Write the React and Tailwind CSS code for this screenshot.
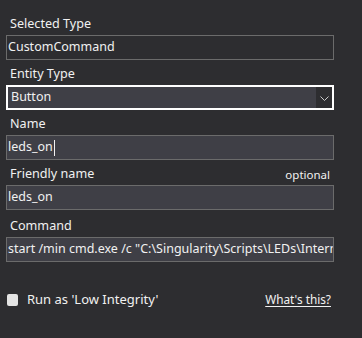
const Label = ({ children, right }) => (
  <div className="flex h-[25px] items-end justify-between pb-[2px] pl-1 pr-1">
    <span className="text-[12.6px] leading-[18px] text-[#f1f1f1]">{children}</span>
    {right && (
      <span className="text-[11.5px] leading-[16px] text-[#f1f1f1]">{right}</span>
    )}
  </div>
);

const Field = ({ value, readOnly, caret }) => (
  <div
    className={`flex h-[25px] items-center overflow-hidden whitespace-nowrap border border-[#6b6b6b] pl-[1px] text-[12.5px] text-[#f1f1f1] ${
      readOnly ? "bg-[#2d2d30]" : "bg-[#3f3f46]"
    }`}
  >
    {value}
    {caret && <span className="ml-px h-[16px] w-px bg-[#f1f1f1]" />}
  </div>
);

export default function App() {
  return (
    <div
      className="h-[338px] w-[362px] bg-[#2d2d30] pl-[6px] pt-[10px]"
      style={{ fontFamily: '"Noto Sans", "Open Sans", sans-serif' }}
    >
      <div className="flex w-[328px] flex-col">
        <Label>Selected Type</Label>
        <Field value="CustomCommand" readOnly />

        <Label>Entity Type</Label>
        <div className="flex h-[25px] border-2 border-white bg-[#2d2d30]">
          <div className="flex flex-1 items-center bg-[#3f3f46] pl-[3px] text-[12.5px] text-[#f1f1f1]">
            Button
          </div>
          <div className="flex w-[16px] items-center justify-center pt-[2px]">
            <svg width="9" height="6" viewBox="0 0 9 6" fill="none">
              <polyline points="0.5,0.5 4.5,4.5 8.5,0.5" stroke="#c8c8c8" strokeWidth="1" />
            </svg>
          </div>
        </div>

        <Label>Name</Label>
        <Field value="leds_on" caret />

        <Label right="optional">Friendly name</Label>
        <Field value="leds_on" />

        <div className="h-[2px]" />
        <Label>Command</Label>
        <Field value={'start /min cmd.exe /c "C:\\Singularity\\Scripts\\LEDs\\Internal.bat"'} />

        <div className="mt-[28px] flex items-center justify-between pl-px pr-[3px]">
          <label className="flex items-center gap-[9px]">
            <span className="h-[12px] w-[11px] rounded-[2px] bg-[#e4e4e4]" />
            <span className="text-[13px] text-[#f1f1f1]">Run as 'Low Integrity'</span>
          </label>
          <a className="text-[11.8px] text-[#f1f1f1] underline underline-offset-2">
            What's this?
          </a>
        </div>
      </div>
    </div>
  );
}
